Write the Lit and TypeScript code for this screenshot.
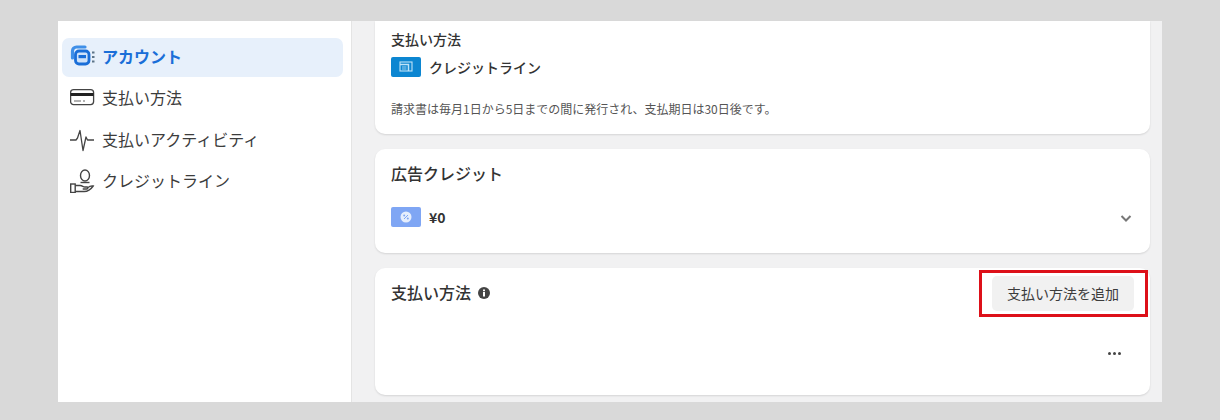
import { LitElement, html, css } from 'lit';
import { customElement } from 'lit/decorators.js';

@customElement('app-root')
export class AppRoot extends LitElement {
    static styles = css`
    :host {
      display: block;
      height: 420px;
      box-sizing: border-box;
      padding: 21px 58px 18px;
      background: #d9d9d9;
      font-family: "Noto Sans CJK JP", "Liberation Sans", sans-serif;
      color: #333;
      overflow: hidden;
    }

    .frame {
      display: grid;
      grid-template-columns: 294px 1fr;
      height: 381px;
      background: #f1f1f2;
    }

    .sidebar {
      background: #fff;
      border-right: 1px solid #e4e4e4;
      padding: 17px 8px 0 4px;
      display: flex;
      flex-direction: column;
      gap: 2.5px;
    }

    .nav {
      display: flex;
      align-items: center;
      box-sizing: border-box;
      height: 39px;
      padding: 0 0 4px 8px;
      gap: 6px;
      border-radius: 7px;
      font-size: 16px;
      line-height: 20px;
      color: #3c3c3c;
    }

    .nav svg {
      width: 26px;
      height: 26px;
      flex: none;
    }

    .nav.active {
      background: #e7f0fb;
      color: #1a6ed8;
      font-weight: 700;
    }

    .main {
      padding: 0 12px 7px 23px;
      display: flex;
      flex-direction: column;
      gap: 15px;
      position: relative;
    }

    .card {
      background: #fff;
      border-radius: 0 0 10px 10px;
      box-shadow: 0 1px 2px rgba(0, 0, 0, 0.12);
      padding: 0 16px;
      box-sizing: border-box;
    }

    .card.round {
      border-radius: 10px;
    }

    .method {
      height: 113px;
      padding-top: 9px;
    }

    .small-title {
      font-size: 14px;
      line-height: 19px;
      font-weight: 500;
      color: #333;
    }

    .row {
      display: flex;
      align-items: center;
      gap: 8px;
    }

    .method .row {
      margin-top: 8px;
      font-size: 14px;
      line-height: 20px;
      font-weight: 500;
    }

    .badge {
      width: 30px;
      height: 20px;
      border-radius: 2px;
      display: flex;
      align-items: center;
      justify-content: center;
      flex: none;
    }

    .badge.blue {
      background: #0c86d1;
    }

    .badge.light {
      background: #7fa6f4;
    }

    .note {
      margin-top: 24px;
      font-size: 12px;
      line-height: 16px;
      color: #555;
    }

    .credit {
      height: 104px;
      padding-top: 12px;
    }

    .title {
      font-size: 16px;
      line-height: 24px;
      font-weight: 500;
      color: #333;
    }

    .credit .row {
      margin-top: 22px;
      justify-content: flex-start;
      font-size: 14px;
      line-height: 20px;
      font-weight: 700;
    }

    .chev {
      margin-left: auto;
      width: 16px;
      height: 16px;
    }

    .pay {
      height: 127px;
      padding-top: 8px;
    }

    .pay-head {
      display: flex;
      align-items: center;
      justify-content: space-between;
      height: 35px;
    }

    .pay-title {
      display: flex;
      align-items: center;
      gap: 7px;
      padding-bottom: 3px;
    }

    .pay-title svg {
      width: 12px;
      height: 12px;
      margin-top: 2px;
    }

    .add {
      box-sizing: border-box;
      width: 142px;
      height: 35px;
      padding-bottom: 2px;
      border-radius: 5px;
      background: #f1f1f1;
      display: flex;
      align-items: center;
      justify-content: center;
      font-size: 14px;
      color: #3c3c3c;
    }

    .more {
      display: flex;
      justify-content: flex-end;
      gap: 2px;
      margin-top: 41px;
      padding-right: 13px;
    }

    .more i {
      width: 3px;
      height: 3px;
      border-radius: 50%;
      background: #444;
    }

    .highlight {
      position: absolute;
      left: 627px;
      top: 249px;
      width: 163px;
      height: 41px;
      border: 3px solid #dd1019;
      pointer-events: none;
    }
    `;

    render() {
        return html`
      <div class="frame">
        <nav class="sidebar">
          <div class="nav active">
            <svg viewBox="0 0 26 26" fill="none">
              <path d="M2.500 15V8A4 4 0 0 1 6.500 4H15" stroke="#3f8fe8" stroke-width="3.200" stroke-linecap="round"/>
              <rect x="5.500" y="8" width="13.500" height="13" rx="3.500" stroke="#1a6ed8" stroke-width="2.800" fill="#cfe2f9"/>
              <rect x="8.500" y="12" width="7.500" height="3.200" fill="#1a6ed8"/>
              <path d="M22 9.500h2.500M22 14h2.500M22 18.500h2.500" stroke="#5d7488" stroke-width="2"/>
            </svg>
            アカウント
          </div>
          <div class="nav">
            <svg viewBox="0 0 26 26" fill="none">
              <rect x="0.600" y="5.600" width="23" height="15" rx="3" stroke="#444" stroke-width="1.300"/>
              <rect x="0.600" y="9" width="23" height="3" fill="#222"/>
              <path d="M4 17h7M13 17h2" stroke="#666" stroke-width="1.200"/>
            </svg>
            支払い方法
          </div>
          <div class="nav">
            <svg viewBox="0 0 26 26" fill="none">
              <path d="M0 14h6l1.500-2L10 4.500 13 24.500 16 11l1.500 3H24" stroke="#444" stroke-width="1.300" stroke-linejoin="round"/>
            </svg>
            支払いアクティビティ
          </div>
          <div class="nav">
            <svg viewBox="0 0 26 26" fill="none" stroke="#444" stroke-width="1.400">
              <ellipse cx="15" cy="8.500" rx="4.500" ry="5.500"/>
              <path d="M10.500 15.500h9"/>
              <rect x="0.700" y="17" width="4.500" height="8.500"/>
              <path d="M5.200 18.500h5c2 0 3 1.500 4.500 1.500h2.500c1 0 1 2-.5 2h-4M5.200 24.500h9c3 0 6.500-2 9-5.500-2-.5-4 .5-6 2"/>
            </svg>
            クレジットライン
          </div>
        </nav>
        <main class="main">
          <section class="card method">
            <div class="small-title">支払い方法</div>
            <div class="row">
              <span class="badge blue">
                <svg width="14" height="12" viewBox="0 0 14 12" fill="none" stroke="#bfe3f8" stroke-width="1.100">
                  <rect x="1" y="1" width="12" height="9"/>
                  <path d="M1 3.500h8.500V10" stroke-width="1.500"/>
                  <path d="M3 6h4.500M3 8h4.500" stroke-width="0.800"/>
                </svg>
              </span>
              クレジットライン
            </div>
            <div class="note">請求書は毎月1日から5日までの間に発行され、支払期日は30日後です。</div>
          </section>
          <section class="card round credit">
            <div class="title">広告クレジット</div>
            <div class="row">
              <span class="badge light">
                <svg width="12" height="12" viewBox="0 0 12 12">
                  <circle cx="6" cy="6" r="5.500" fill="#e6eefc"/>
                  <path d="M4 8l4-4" stroke="#7fa6f4" stroke-width="1"/>
                  <circle cx="4.200" cy="4.500" r="1" fill="#7fa6f4"/>
                  <circle cx="7.800" cy="7.500" r="1" fill="#7fa6f4"/>
                </svg>
              </span>
              ¥0
              <svg class="chev" viewBox="0 0 16 16" fill="none">
                <path d="M3.500 7L8 11.500 12.500 7" stroke="#777" stroke-width="2"/>
              </svg>
            </div>
          </section>
          <section class="card round pay">
            <div class="pay-head">
              <div class="title pay-title">
                支払い方法
                <svg viewBox="0 0 12 12">
                  <circle cx="6" cy="6" r="6" fill="#444"/>
                  <rect x="5" y="5" width="2" height="4.500" fill="#fff"/>
                  <rect x="5" y="2.500" width="2" height="1.700" fill="#fff"/>
                </svg>
              </div>
              <div class="add">支払い方法を追加</div>
            </div>
            <div class="more"><i></i><i></i><i></i></div>
          </section>
          <div class="highlight"></div>
        </main>
      </div>
    `;
    }
}
